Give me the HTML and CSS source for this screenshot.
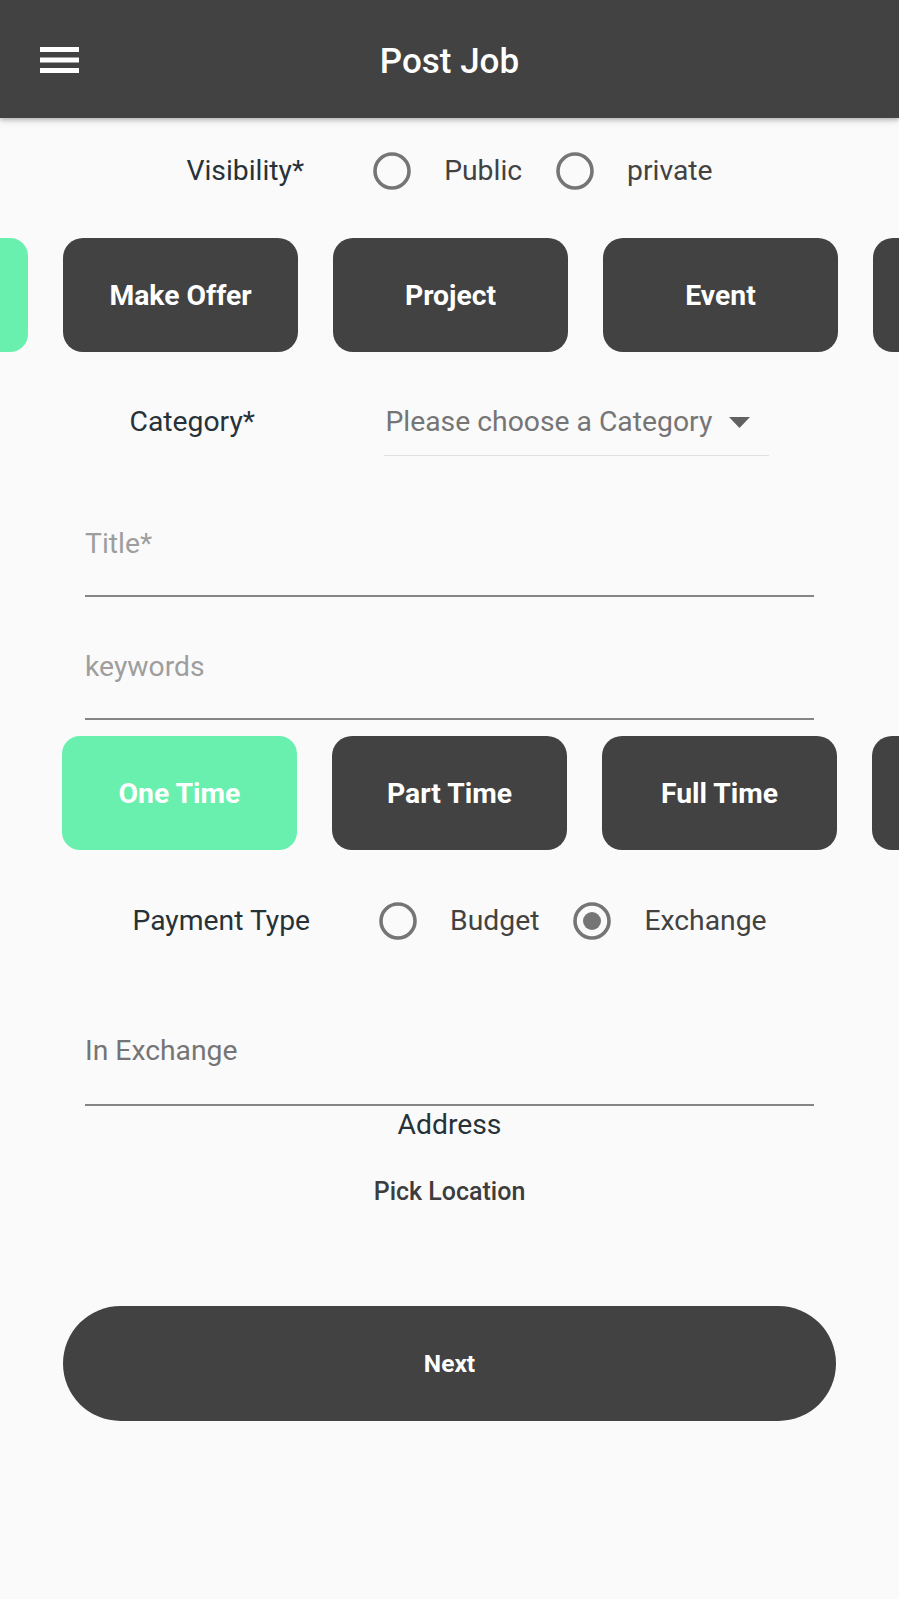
FILE: index.html
```html
<!DOCTYPE html>
<html lang="en">
<head>
<meta charset="utf-8">
<title>Post Job</title>
<link rel="stylesheet" href="styles.css">
</head>
<body>
<header class="appbar">
  <div class="appbar-left">
    <svg class="menu-icon" width="39" height="26" viewBox="0 0 39 26" aria-hidden="true">
      <rect x="0" y="0" width="39" height="5" fill="#fff"/>
      <rect x="0" y="10.5" width="39" height="5" fill="#fff"/>
      <rect x="0" y="21" width="39" height="5" fill="#fff"/>
    </svg>
  </div>
  <h1 class="appbar-title">Post Job</h1>
  <div class="appbar-right"></div>
</header>

<main class="content">
  <div class="radio-row row-visibility">
    <span class="row-label">Visibility*</span>
    <span class="radio">
      <svg width="38" height="38" viewBox="0 0 38 38"><circle cx="19" cy="19" r="17" fill="none" stroke="#757575" stroke-width="3.6"/></svg>
    </span>
    <span class="radio-text">Public</span>
    <span class="radio second">
      <svg width="38" height="38" viewBox="0 0 38 38"><circle cx="19" cy="19" r="17" fill="none" stroke="#757575" stroke-width="3.6"/></svg>
    </span>
    <span class="radio-text">private</span>
  </div>

  <div class="chip-strip strip-type">
    <div class="chip-track track-scrolled">
      <div class="chip chip-active" aria-hidden="true"></div>
      <div class="chip">Make Offer</div>
      <div class="chip">Project</div>
      <div class="chip">Event</div>
      <div class="chip" aria-hidden="true"></div>
    </div>
  </div>

  <div class="category-row">
    <span class="row-label">Category*</span>
    <div class="dropdown">
      <span class="dropdown-hint">Please choose a Category</span>
      <svg class="dropdown-arrow" width="21" height="11" viewBox="0 0 21 11"><polygon points="0,0 21,0 10.5,11" fill="#616161"/></svg>
    </div>
  </div>

  <div class="field field-title"><span class="hint">Title*</span></div>
  <div class="field field-keywords"><span class="hint">keywords</span></div>

  <div class="chip-strip strip-time">
    <div class="chip-track">
      <div class="chip chip-active">One Time</div>
      <div class="chip">Part Time</div>
      <div class="chip">Full Time</div>
      <div class="chip" aria-hidden="true"></div>
    </div>
  </div>

  <div class="radio-row row-payment">
    <span class="row-label">Payment Type</span>
    <span class="radio">
      <svg width="38" height="38" viewBox="0 0 38 38"><circle cx="19" cy="19" r="17" fill="none" stroke="#757575" stroke-width="3.6"/></svg>
    </span>
    <span class="radio-text">Budget</span>
    <span class="radio second">
      <svg width="38" height="38" viewBox="0 0 38 38"><circle cx="19" cy="19" r="17" fill="none" stroke="#757575" stroke-width="3.6"/><circle cx="19" cy="19" r="9" fill="#757575"/></svg>
    </span>
    <span class="radio-text">Exchange</span>
  </div>

  <div class="field field-exchange"><span class="label-text">In Exchange</span></div>

  <div class="address">Address</div>
  <div class="pick-location">Pick Location</div>

  <div class="next-wrap">
    <div class="next-btn">Next</div>
  </div>
</main>
</body>
</html>
```

FILE: styles.css
```css
* { box-sizing: border-box; }

html, body {
  margin: 0;
  padding: 0;
}

body {
  background: #fafafa;
  font-family: Roboto, "Noto Sans", "Liberation Sans", sans-serif;
  width: 899px;
  min-height: 1599px;
  overflow: hidden;
}

.appbar {
  position: relative;
  z-index: 2;
  height: 118px;
  background: #424242;
  display: grid;
  grid-template-columns: 1fr auto 1fr;
  align-items: center;
  box-shadow: 0 2px 4px rgba(0, 0, 0, 0.22), 0 4px 8px rgba(0, 0, 0, 0.08);
}

.appbar-left {
  padding-left: 40px;
  display: flex;
  align-items: center;
  height: 118px;
  padding-top: 2px;
}

.menu-icon { display: block; }

.appbar-title {
  margin: 0;
  color: #ffffff;
  font-size: 35px;
  font-weight: 500;
  line-height: 40px;
  padding-top: 5px;
}

.content {
  display: flex;
  flex-direction: column;
}

/* radio rows */
.radio-row {
  display: flex;
  justify-content: center;
  align-items: center;
  height: 60px;
  font-size: 28.3px;
  line-height: 60px;
}

.row-visibility { margin-top: 23px; }
.row-payment { margin-top: 41px; }

.row-label {
  color: #263238;
  font-size: 28.3px;
  line-height: 60px;
}

.radio-row .row-label { margin-right: 69px; }

.radio {
  width: 38px;
  height: 38px;
  display: flex;
}

.radio.second { margin-left: 34px; }

.radio-text {
  color: #424242;
  margin-left: 33px;
}

/* chip strips */
.chip-strip {
  overflow: hidden;
  width: 899px;
}

.strip-type { margin-top: 37px; }
.strip-time { margin-top: 16px; }

.chip-track {
  display: flex;
  gap: 35px;
  margin-left: 62px;
}

.track-scrolled { margin-left: -207px; }

.chip {
  flex: 0 0 235px;
  height: 114px;
  border-radius: 20px;
  background: #424242;
  color: #ffffff;
  font-size: 28.3px;
  font-weight: 700;
  display: flex;
  align-items: center;
  justify-content: center;
}

.chip-active {
  background: #69f0ae;
  border-radius: 18px;
}

/* category */
.category-row {
  display: flex;
  justify-content: space-evenly;
  align-items: flex-start;
  margin-top: 40px;
}

.dropdown {
  width: 385px;
  display: flex;
  align-items: center;
  height: 64px;
  padding-bottom: 4px;
  border-bottom: 1px solid #e0e0e0;
}

.dropdown-hint {
  color: #757575;
  font-size: 28.3px;
  line-height: 60px;
  padding-left: 1px;
}

.dropdown-arrow {
  margin-left: 17px;
  margin-top: 2px;
}

/* text fields */
.field {
  margin: 0 85px;
  padding-top: 51px;
  padding-bottom: 31px;
  border-bottom: 2px solid #858585;
  font-size: 28.3px;
  line-height: 40px;
}

.field-title { margin-top: 17px; }
.field-keywords { padding-top: 50px; }

.hint { color: #9e9e9e; }

.field-exchange {
  padding-top: 80px;
  padding-bottom: 33px;
}

.label-text { color: #757575; }

.address {
  text-align: center;
  color: #263238;
  font-size: 28.3px;
  line-height: 34px;
  margin-top: 2px;
}

.pick-location {
  margin-top: 30px;
  text-align: center;
  color: #3d3d3d;
  font-size: 25px;
  font-weight: 500;
  line-height: 40px;
}

.next-wrap {
  padding: 0 63px;
  margin-top: 94px;
}

.next-btn {
  height: 115px;
  border-radius: 58px;
  background: #424242;
  color: #ffffff;
  font-size: 24.5px;
  font-weight: 700;
  display: flex;
  align-items: center;
  justify-content: center;
}
```
